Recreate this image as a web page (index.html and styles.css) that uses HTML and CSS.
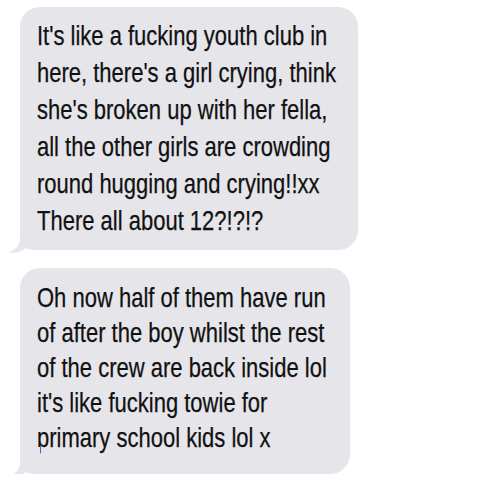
FILE: index.html
```html
<!DOCTYPE html>
<html>
<head>
<meta charset="utf-8">
<link rel="stylesheet" href="styles.css">
</head>
<body>
<div class="thread">
  <div class="bubble bubble-one">
    <p class="text">It's like a fucking youth club in<br>here, there's a girl crying, think<br>she's broken up with her fella,<br>all the other girls are crowding<br>round hugging and crying!!xx<br>There all about 12?!?!?</p>
    <svg class="tail" viewBox="0 0 32 30" width="32" height="30"><path d="M12 0 L12 15 C12 22 8 27 0 29.5 C8 30.5 14 28.5 18 25 C21 27 25 27 32 27 L32 0 Z"/></svg>
  </div>
  <div class="bubble bubble-two">
    <p class="text">Oh now half of them have run<br>of after the boy whilst the rest<br>of the crew are back inside lol<br>it's like fucking towie for<br>primary school kids lol x</p>
    <svg class="tail" viewBox="0 0 32 30" width="32" height="30"><path d="M12 0 L12 15 C12 22 8 27 0 29.5 C8 30.5 14 28.5 18 25 C21 27 25 27 32 27 L32 0 Z"/></svg>
  </div>
</div>
</body>
</html>
```
FILE: styles.css
```css
html, body {
  margin: 0;
  padding: 0;
  background: #ffffff;
}
.thread {
  display: flex;
  flex-direction: column;
  align-items: flex-start;
  padding: 7px 0 0 20px;
  gap: 18px;
}
.bubble {
  position: relative;
  background: #e5e5ea;
  border-radius: 20px;
  box-sizing: border-box;
}
.bubble-one {
  width: 338px;
  height: 243px;
  padding: 10px 0 0 17px;
}
.bubble-two {
  width: 330px;
  height: 206px;
  padding: 12px 0 0 17px;
}
.text {
  margin: 0;
  font-family: "Liberation Sans", Arial, sans-serif;
  font-size: 27.5px;
  color: #111111;
  white-space: nowrap;
  -webkit-text-stroke: 0.25px #111111;
  transform: scaleX(0.8);
  transform-origin: left top;
}
.bubble-one .text { line-height: 37px; }
.bubble-two .text { line-height: 35px; }
.tail {
  position: absolute;
  left: -12px;
  bottom: -3px;
  fill: #e5e5ea;
}
```
